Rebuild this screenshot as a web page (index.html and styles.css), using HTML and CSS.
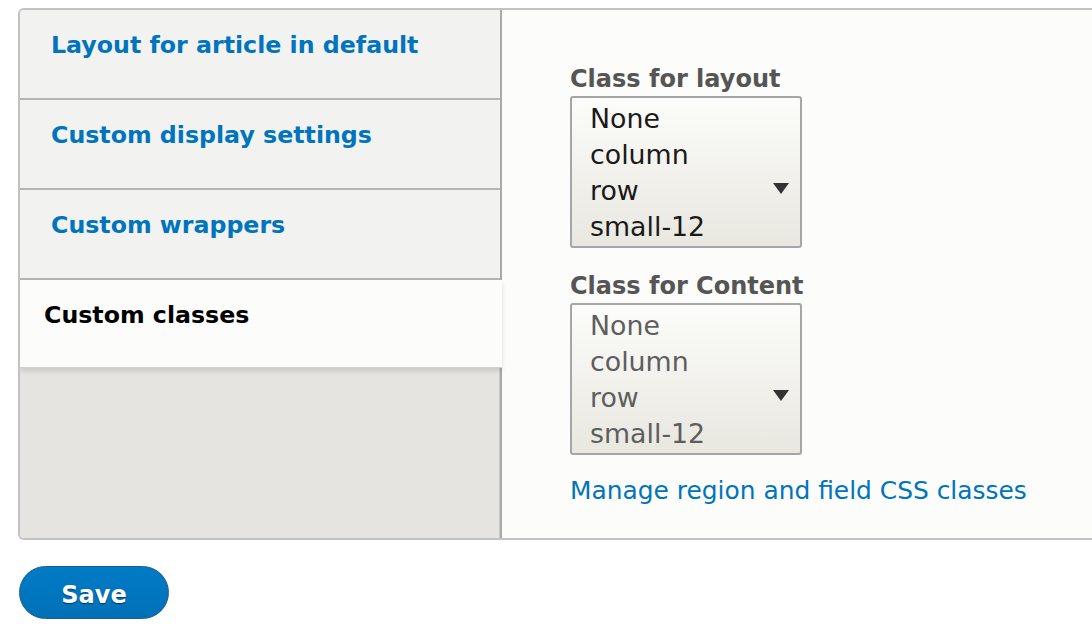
FILE: index.html
```html
<!DOCTYPE html>
<html>
<head>
<meta charset="utf-8">
<link rel="stylesheet" href="styles.css">
</head>
<body>
<div class="page">
  <div class="vtabs">
    <ul class="tab-menu">
      <li class="tab"><a href="#">Layout for article in default</a></li>
      <li class="tab"><a href="#">Custom display settings</a></li>
      <li class="tab"><a href="#">Custom wrappers</a></li>
      <li class="tab selected"><a href="#">Custom classes</a></li>
    </ul>
    <div class="pane">
      <div class="field">
        <div class="label">Class for layout</div>
        <div class="select">
          <div class="options">
            <div>None</div>
            <div>column</div>
            <div>row</div>
            <div>small-12</div>
          </div>
          <span class="arrow"></span>
        </div>
      </div>
      <div class="field">
        <div class="label">Class for Content</div>
        <div class="select disabled">
          <div class="options">
            <div>None</div>
            <div>column</div>
            <div>row</div>
            <div>small-12</div>
          </div>
          <span class="arrow"></span>
        </div>
      </div>
      <a class="manage" href="#">Manage region and field CSS classes</a>
    </div>
  </div>
  <div class="actions">
    <button class="save">Save</button>
  </div>
</div>
</body>
</html>
```
FILE: styles.css
```css
html, body {
  margin: 0;
  padding: 0;
  background: #fff;
  overflow: hidden;
}
body {
  font-family: "DejaVu Sans", "Noto Sans", sans-serif;
  width: 1092px;
  height: 636px;
}
.page {
  padding: 8px 0 0 18px;
}
.vtabs {
  display: flex;
  width: 1100px;
  height: 528px;
  border: 2px solid #c2c2c2;
  border-right: none;
  border-radius: 6px 0 0 6px;
  overflow: hidden;
}
.tab-menu {
  list-style: none;
  margin: 0;
  padding: 0;
  width: 480px;
  flex: none;
  background: #e5e4e0;
  border-right: 2px solid #a9a9a7;
  box-shadow: inset -1px 0 0 #c9c9c6;
}
.tab {
  height: 88px;
  background: #f2f2f1;
  border-bottom: 2px solid #b5b5b2;
  padding: 0 0 0 31px;
  box-sizing: content-box;
}
.tab a {
  display: block;
  padding-top: 20px;
  font-size: 23.7px;
  font-weight: bold;
  line-height: 30px;
  color: #0074bd;
  text-decoration: none;
}
.tab.selected {
  background: #fcfcfa;
  margin-right: -2px;
  padding-left: 24px;
  border-bottom: 1px solid #d0d0cc;
  height: 87px;
  position: relative;
  box-shadow: 0 3px 5px rgba(0, 0, 0, 0.12);
}
.tab.selected a {
  color: #000;
}
.pane {
  flex: 1;
  background: #fcfcfa;
  padding: 54px 0 0 68px;
}
.field {
  margin-bottom: 23px;
}
.label {
  font-size: 24px;
  font-weight: bold;
  color: #555;
  line-height: 30px;
}
.select {
  position: relative;
  width: 228px;
  height: 148px;
  margin-top: 2px;
  border: 2px solid #a6a6a6;
  border-radius: 3px;
  background: linear-gradient(#fcfcfa, #e8e7e0);
  box-sizing: content-box;
}
.options {
  padding: 3px 0 0 18px;
  font-size: 26.8px;
  line-height: 36px;
  color: #1a1a1a;
}
.select.disabled .options {
  color: #5e5e5e;
}
.arrow {
  position: absolute;
  right: 11px;
  top: 85px;
  width: 0;
  height: 0;
  border-left: 8px solid transparent;
  border-right: 8px solid transparent;
  border-top: 11px solid #333;
}
.manage {
  display: block;
  margin-top: -2px;
  font-size: 24.9px;
  line-height: 30px;
  color: #0074bd;
  text-decoration: none;
}
.actions {
  padding: 26px 0 0 1px;
}
.save {
  width: 150px;
  height: 53px;
  border: 1px solid #1e5c90;
  border-radius: 27px;
  background: linear-gradient(#007bc6, #0071b8);
  color: #fff;
  font-family: "DejaVu Sans", "Noto Sans", sans-serif;
  font-size: 24px;
  font-weight: bold;
  text-shadow: 0 1px 1px rgba(0, 0, 0, 0.5);
  padding: 4px 0 0;
}
```
